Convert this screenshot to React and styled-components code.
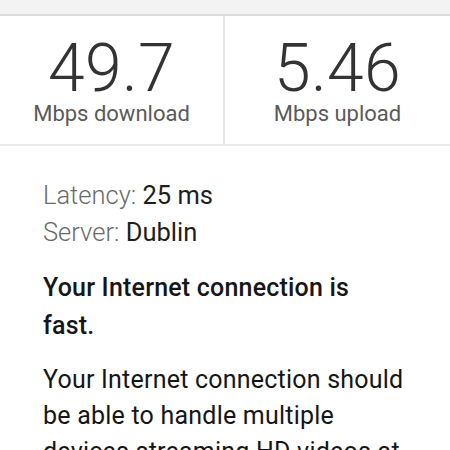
import React from "react";
import styled, { createGlobalStyle } from "styled-components";

const Global = createGlobalStyle`
  html, body { margin: 0; padding: 0; background: #ffffff; }
  body { font-family: Roboto, "Noto Sans", sans-serif; overflow: hidden; }
`;

const Page = styled.div`
  width: 450px;
  height: 450px;
  overflow: hidden;
  background: #fff;
`;

const TopBar = styled.div`
  height: 14px;
  background: #f3f3f4;
  border-bottom: 2px solid #dcdcdc;
`;

const Stats = styled.div`
  display: grid;
  grid-template-columns: 225px 1fr;
  height: 128px;
  border-bottom: 2px solid #e8e8e8;
`;

const Stat = styled.div`
  display: flex;
  flex-direction: column;
  align-items: center;
  padding-top: 20px;
  border-right: ${(p) => (p.$divider ? "2px solid #e6e6e6" : "none")};
`;

const Value = styled.div`
  font-size: 66px;
  font-weight: 300;
  color: #333;
  line-height: 66px;
  letter-spacing: 0.3px;
`;

const Unit = styled.div`
  font-size: 22px;
  font-weight: 400;
  color: #5a5a5a;
  line-height: 24px;
`;

const Body = styled.div`
  padding: 31px 43px 0 43px;
`;

const InfoLine = styled.div`
  font-size: 25.5px;
  line-height: 36.5px;
  color: #1e1e1e;
`;

const Label = styled.span`
  font-weight: 300;
  color: #6a6a6a;
`;

const Heading = styled.div`
  margin-top: 19px;
  font-size: 25px;
  line-height: 37.5px;
  font-weight: 500;
  color: #161616;
  letter-spacing: 0.2px;
`;

const Paragraph = styled.p`
  margin: 18px 0 0 0;
  font-size: 25px;
  line-height: 36px;
  font-weight: 400;
  color: #161616;
  letter-spacing: 0.22px;
`;

export default function App() {
  return (
    <Page>
      <Global />
      <TopBar />
      <Stats>
        <Stat $divider>
          <Value>49.7</Value>
          <Unit>Mbps download</Unit>
        </Stat>
        <Stat>
          <Value>5.46</Value>
          <Unit>Mbps upload</Unit>
        </Stat>
      </Stats>
      <Body>
        <InfoLine>
          <Label>Latency:</Label> 25 ms
        </InfoLine>
        <InfoLine>
          <Label>Server:</Label> Dublin
        </InfoLine>
        <Heading>Your Internet connection is fast.</Heading>
        <Paragraph>
          Your Internet connection should be able to handle multiple devices
          streaming HD videos at the same time.
        </Paragraph>
      </Body>
    </Page>
  );
}
